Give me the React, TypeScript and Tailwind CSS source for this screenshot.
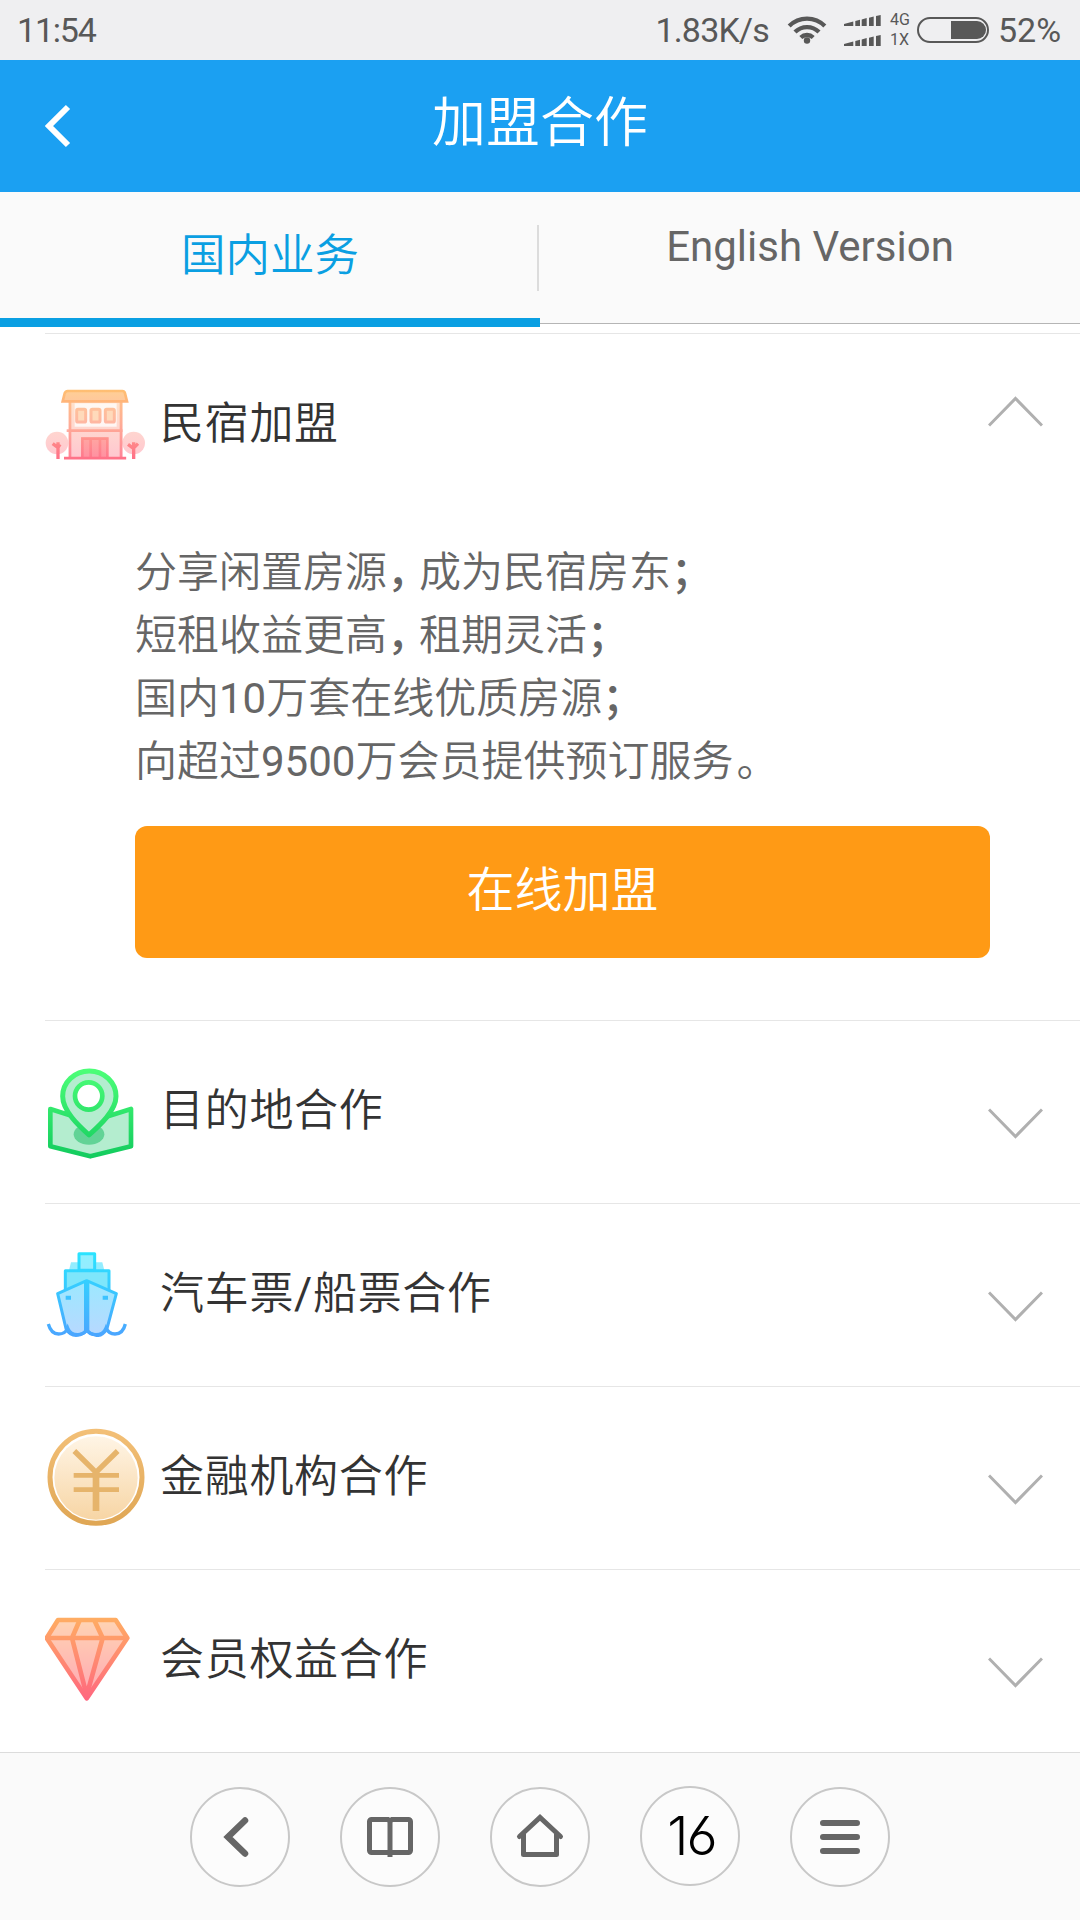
import { useState } from "react";
import type { ReactNode } from "react";

interface Section {
  id: string;
  title: ReactNode;
  icon: ReactNode;
}

const sections: Section[] = [
  { id: "homestay", title: "民宿加盟", icon: <HouseIcon /> },
  { id: "destination", title: "目的地合作", icon: <MapPinIcon /> },
  {
    id: "ticket",
    title: (
      <>
        汽车票<span className="font-normal">/</span>船票合作
      </>
    ),
    icon: <ShipIcon />,
  },
  { id: "finance", title: "金融机构合作", icon: <CoinIcon /> },
  { id: "member", title: "会员权益合作", icon: <DiamondIcon /> },
];

export default function App() {
  const [openId, setOpenId] = useState<string | null>("homestay");

  return (
    <div className="flex h-[1920px] w-[1080px] flex-col overflow-hidden bg-white font-['Roboto','Noto_Sans_CJK_SC',sans-serif]">
      <StatusBar />

      <header className="flex h-[132px] shrink-0 items-center bg-[#1ba0f2] text-white">
        <button className="flex w-[120px] pl-[45px]" aria-label="back">
          <svg width="26" height="44" viewBox="0 0 26 44" fill="none" stroke="currentColor" strokeWidth="6">
            <path d="M23 3L4 22l19 19" />
          </svg>
        </button>
        <h1 className="flex-1 pb-1 text-center text-[54px] leading-[72px] font-[350]">加盟合作</h1>
        <div className="w-[120px]" />
      </header>

      <Tabs />

      <main className="mt-[9px] flex-1">
        {sections.map((s) => (
          <SectionRow
            key={s.id}
            section={s}
            open={openId === s.id}
            onToggle={() => setOpenId(openId === s.id ? null : s.id)}
          />
        ))}
      </main>

      <BrowserBar />
    </div>
  );
}

function StatusBar() {
  return (
    <div className="flex h-[60px] shrink-0 items-center bg-[#efeff1] pl-[17px] text-[34px] leading-[60px] text-[#585858]">
      <span className="tracking-[-1.2px]">11:54</span>
      <span className="ml-auto tracking-[-0.8px]">1.83K/s</span>
      <svg className="ml-[18px]" width="40" height="30" viewBox="0 0 40 30" fill="none" stroke="currentColor" strokeWidth="4.3">
        <path d="M2.2 11a25 25 0 0 1 35.6 0M8 17a17 17 0 0 1 24 0M13.8 22.5a9 9 0 0 1 12.4 0" />
        <circle cx="20" cy="25.5" r="3.2" fill="currentColor" stroke="none" />
      </svg>
      <div className="ml-[17px] flex flex-col gap-[9px]">
        <SignalBars />
        <SignalBars />
      </div>
      <div className="ml-[9px] flex w-[22px] flex-col text-[16px] leading-5">
        <span>4G</span>
        <span>1X</span>
      </div>
      <svg className="ml-[5px]" width="72" height="26" viewBox="0 0 72 26">
        <rect x="1" y="1" width="70" height="24" rx="12" fill="none" stroke="currentColor" strokeWidth="2" />
        <path d="M34 4h26a9 9 0 0 1 0 18H34z" fill="currentColor" />
      </svg>
      <span className="w-[91px] pl-[9px]">52%</span>
    </div>
  );
}

function SignalBars() {
  return (
    <svg width="37" height="11" viewBox="0 0 37 11" fill="currentColor">
      <path d="M0 9l9.3-2.5V11H0zM11.3 6l4.7-1.2V11h-4.7zM17.7 4.5l5-1.4V11h-5zM25 2.7l4.7-1.2V11H25zM32 1l4.7-1v11H32z" />
    </svg>
  );
}

function Tabs() {
  return (
    <div className="flex h-[132px] shrink-0 border-b border-[#b5b5b5] bg-[#fafafa]">
      <button className="relative h-[135px] w-[540px] border-b-[9px] border-[#0a9fe2] text-[44.5px] leading-[128px] font-[350] text-[#0a9fe2]">
        国内业务
        <span className="absolute top-[33px] right-px h-[66px] w-[2px] bg-[#dcdcdc]" />
      </button>
      <button className="h-[110px] flex-1 text-[42px] leading-[110px] text-[#666]">English Version</button>
    </div>
  );
}

function SectionRow({
  section,
  open,
  onToggle,
}: {
  section: Section;
  open: boolean;
  onToggle: () => void;
}) {
  return (
    <section className="ml-[45px] border-t border-[#e6e6e6]">
      <button onClick={onToggle} className="flex h-[182px] w-full items-center pr-[37px] text-left">
        <span className="w-[115px] blur-[0.7px]">{section.icon}</span>
        <span className="flex-1 pb-[3px] text-[44px] leading-[60px] font-[350] tracking-[0.7px] text-[#333]">
          {section.title}
        </span>
        <svg
          className={open ? "mb-[27px] rotate-180" : "mt-[22px]"}
          width="55"
          height="31"
          viewBox="0 0 55 31"
          fill="none"
          stroke="#b0b0b0"
          strokeWidth="3"
        >
          <path d="M1 1.500l26.500 27 26.500-27" />
        </svg>
      </button>
      {open && (
        <div className="pt-[25px] pr-[90px] pb-[62px] pl-[90px]">
          <div className="text-[42px] leading-[63px] font-[350] text-[#666]">
            <p>
              分享闲置房源<Punct>，</Punct>成为民宿房东<Punct>；</Punct>
            </p>
            <p>
              短租收益更高<Punct>，</Punct>租期灵活<Punct>；</Punct>
            </p>
            <p>
              国内<span className="font-normal">10</span>万套在线优质房源<Punct>；</Punct>
            </p>
            <p>
              向超过<span className="font-normal">9500</span>万会员提供预订服务
              <span className="pl-[3px]">。</span>
            </p>
          </div>
          <button className="mt-[33px] block h-[132px] w-full rounded-xl bg-[#ff9a15] pb-0.5 text-[48px] leading-[130px] font-[350] text-white">
            在线加盟
          </button>
        </div>
      )}
    </section>
  );
}

// tightens full-width punctuation
function Punct({ children }: { children: string }) {
  return <span className="font-medium tracking-[-10px]">{children}</span>;
}

function BrowserBar() {
  return (
    <nav className="flex h-[168px] shrink-0 items-center justify-center gap-[50px] border-t border-[#dcdcdc] bg-[#fafafa] text-[#666]">
      <NavButton label="back">
        <path d="M55 33.5L38 50l17 16.5" strokeWidth="6.5" strokeLinecap="round" />
      </NavButton>
      <NavButton label="bookmarks">
        <path d="M50 35v31M50 65.5H31.5a2 2 0 0 1-2-2V34.5a2 2 0 0 1 2-2H48l2 2 2-2h16.500a2 2 0 0 1 2 2v29a2 2 0 0 1-2 2H50zM50 64v6" strokeWidth="5" />
      </NavButton>
      <NavButton label="home">
        <path d="M29.5 49.5L50 30.5l20.5 19" strokeWidth="5" strokeLinecap="round" />
        <path d="M33.5 47v20.5h33V47" strokeWidth="5" strokeLinejoin="round" />
      </NavButton>
      <button className="mb-px h-[100px] w-[100px] rounded-full border-2 border-[#c8c8c8] bg-[#fcfcfc] pl-[3px] font-['Inter',sans-serif] text-[54px] leading-[92px] font-[350] tracking-[-2px] text-black [font-feature-settings:'cv03']">
        16
      </button>
      <NavButton label="menu">
        <path d="M33 36h34M33 50h34M33 64h34" strokeWidth="6" strokeLinecap="round" />
      </NavButton>
    </nav>
  );
}

function NavButton({ label, children }: { label: string; children: ReactNode }) {
  return (
    <button aria-label={label} className="h-[100px] w-[100px] rounded-full bg-[#fcfcfc]">
      <svg width="100" height="100" viewBox="0 0 100 100" fill="none" stroke="currentColor">
        <circle cx="50" cy="50" r="49" stroke="#c8c8c8" strokeWidth="2" />
        {children}
      </svg>
    </button>
  );
}

function HouseIcon() {
  return (
    <svg className="mb-[2px]" width="105" height="71" viewBox="45 55 315 213">
      <defs>
        <linearGradient id="house" gradientUnits="userSpaceOnUse" x1="0" y1="58" x2="0" y2="266">
          <stop offset="0" stopColor="#ffbf72" />
          <stop offset="0.5" stopColor="#ffa088" />
          <stop offset="1" stopColor="#ff7088" />
        </linearGradient>
      </defs>
      <g fill="url(#house)">
        <circle cx="81" cy="217" r="34" opacity="0.4" />
        <circle cx="311" cy="217" r="34" opacity="0.4" />
        <path d="M116 92h162v170H116z" opacity="0.4" />
        <path d="M134 98h126v70H134z" fill="#fff" opacity="0.75" />
        <path d="M110 60h170l12 32H98z" opacity="0.75" />
        <path d="M154 200h81v62h-81z" opacity="0.65" />
      </g>
      <g fill="none" stroke="url(#house)" strokeWidth="8">
        <path d="M113 61h164q6 0 8 7l6 24H98l6-24q3-7 9-7z" />
        <path d="M120 92v170M273 92v170M110 180h168" opacity="0.8" />
        <g opacity="0.75" strokeWidth="9">
          <rect x="140" y="116" width="27" height="38" rx="4" fill="#ffd0a8" />
          <rect x="183" y="116" width="27" height="38" rx="4" fill="#ffd0a8" />
          <rect x="226" y="116" width="27" height="38" rx="4" fill="#ffd0a8" />
        </g>
        <path d="M157 262v-58h75v58M182 206v54M210 206v54" opacity="0.8" />
        <path d="M102 262.500h186.500" />
        <path d="M84 265v-50M68 219l16 12 6-10M311 265v-50M294 221l16 12 14-14" strokeWidth="10" />
      </g>
    </svg>
  );
}

function MapPinIcon() {
  return (
    <svg className="mt-[2px]" width="105" height="91" viewBox="46 55 315 273">
      <defs>
        <linearGradient id="pin" gradientUnits="userSpaceOnUse" x1="0" y1="58" x2="0" y2="324">
          <stop offset="0" stopColor="#4dff78" />
          <stop offset="1" stopColor="#12cb5e" />
        </linearGradient>
      </defs>
      <path d="M62 178l120 38 122-38v112l-122 30-120-30z" fill="#b4edcf" stroke="url(#pin)" strokeWidth="14" strokeLinejoin="round" />
      <path d="M103 178h154l-79 75z" fill="#b4edcf" />
      <ellipse cx="178" cy="254" rx="46" ry="31" fill="#62d396" />
      <path
        d="M178 256c-30-27-79-72-79-116a80 76 0 0 1 160 0c0 44-51 89-81 116z"
        fill="#b4edcf"
        stroke="url(#pin)"
        strokeWidth="15"
        strokeLinejoin="round"
      />
      <circle cx="177" cy="139" r="41" fill="#fff" stroke="url(#pin)" strokeWidth="14" />
    </svg>
  );
}

function ShipIcon() {
  return (
    <svg className="mb-[2px]" width="105" height="85" viewBox="46 65 315 255">
      <defs>
        <linearGradient id="ship" gradientUnits="userSpaceOnUse" x1="0" y1="66" x2="0" y2="318">
          <stop offset="0" stopColor="#2ae4ff" />
          <stop offset="1" stopColor="#4ba5ff" />
        </linearGradient>
        <linearGradient id="hull" gradientUnits="userSpaceOnUse" x1="0" y1="66" x2="0" y2="318">
          <stop offset="0" stopColor="#8df1ff" />
          <stop offset="1" stopColor="#b8d8ff" />
        </linearGradient>
      </defs>
      <g fill="url(#hull)" stroke="url(#ship)" strokeWidth="9" strokeLinejoin="round">
        <path d="M124 96h94l6 24H118z" stroke="none" />
        <path d="M148 70h47v50h-47z" />
        <path d="M107 121h131v68H107z" fill="#7ee6fb" />
        <path d="M171 151l89 39-28 105q-15 24-33 20-15-3-28-15-12 12-27 15-22 3-35-20L84 190z" />
        <path d="M171 152v150" strokeWidth="16" />
        <path d="M108 202h16M219 202h16" strokeWidth="12" />
      </g>
      <path
        d="M56 281q8 30 31 30 20 0 27-18 8 20 30 20 20 0 27-15 8 15 28 15 22 0 30-20 8 18 27 18 24 0 31-30"
        fill="none"
        stroke="url(#ship)"
        strokeWidth="10"
      />
    </svg>
  );
}

function CoinIcon() {
  return (
    <svg className="mb-[2px]" width="105" height="100" viewBox="45 50 315 300">
      <defs>
        <linearGradient id="coin" gradientUnits="userSpaceOnUse" x1="0" y1="55" x2="0" y2="345">
          <stop offset="0" stopColor="#f3c078" />
          <stop offset="1" stopColor="#dfa654" />
        </linearGradient>
        <linearGradient id="coinFill" gradientUnits="userSpaceOnUse" x1="0" y1="75" x2="0" y2="330">
          <stop offset="0" stopColor="#fff5e6" />
          <stop offset="1" stopColor="#f7d5a4" />
        </linearGradient>
      </defs>
      <circle cx="198" cy="201" r="138" fill="#fff" stroke="url(#coin)" strokeWidth="15" />
      <circle cx="198" cy="203" r="125" fill="url(#coinFill)" />
      <path d="M133 122l65 64 65-64" fill="none" stroke="#e6b46b" strokeWidth="16" />
      <path d="M131 195h136M131 238h136" stroke="#e6b46b" strokeWidth="14" />
      <path d="M198 184v118" stroke="#e6b46b" strokeWidth="20" />
    </svg>
  );
}

function DiamondIcon() {
  return (
    <svg className="mb-[4px]" width="105" height="85" viewBox="46 52 315 255">
      <defs>
        <linearGradient id="gem" gradientUnits="userSpaceOnUse" x1="0" y1="54" x2="0" y2="304">
          <stop offset="0" stopColor="#ffad62" />
          <stop offset="1" stopColor="#ff6680" />
        </linearGradient>
        <linearGradient id="gemFill" gradientUnits="userSpaceOnUse" x1="0" y1="54" x2="0" y2="304">
          <stop offset="0" stopColor="#ffd5b3" />
          <stop offset="1" stopColor="#ffa5b3" />
        </linearGradient>
      </defs>
      <g fill="url(#gemFill)" stroke="url(#gem)" strokeWidth="14" strokeLinejoin="round">
        <path d="M85 61h173l35 54-122 181L51 115z" />
        <path d="M51 115h242M149 64l-22 51 44 172 48-172-24-51" fill="none" />
      </g>
    </svg>
  );
}
